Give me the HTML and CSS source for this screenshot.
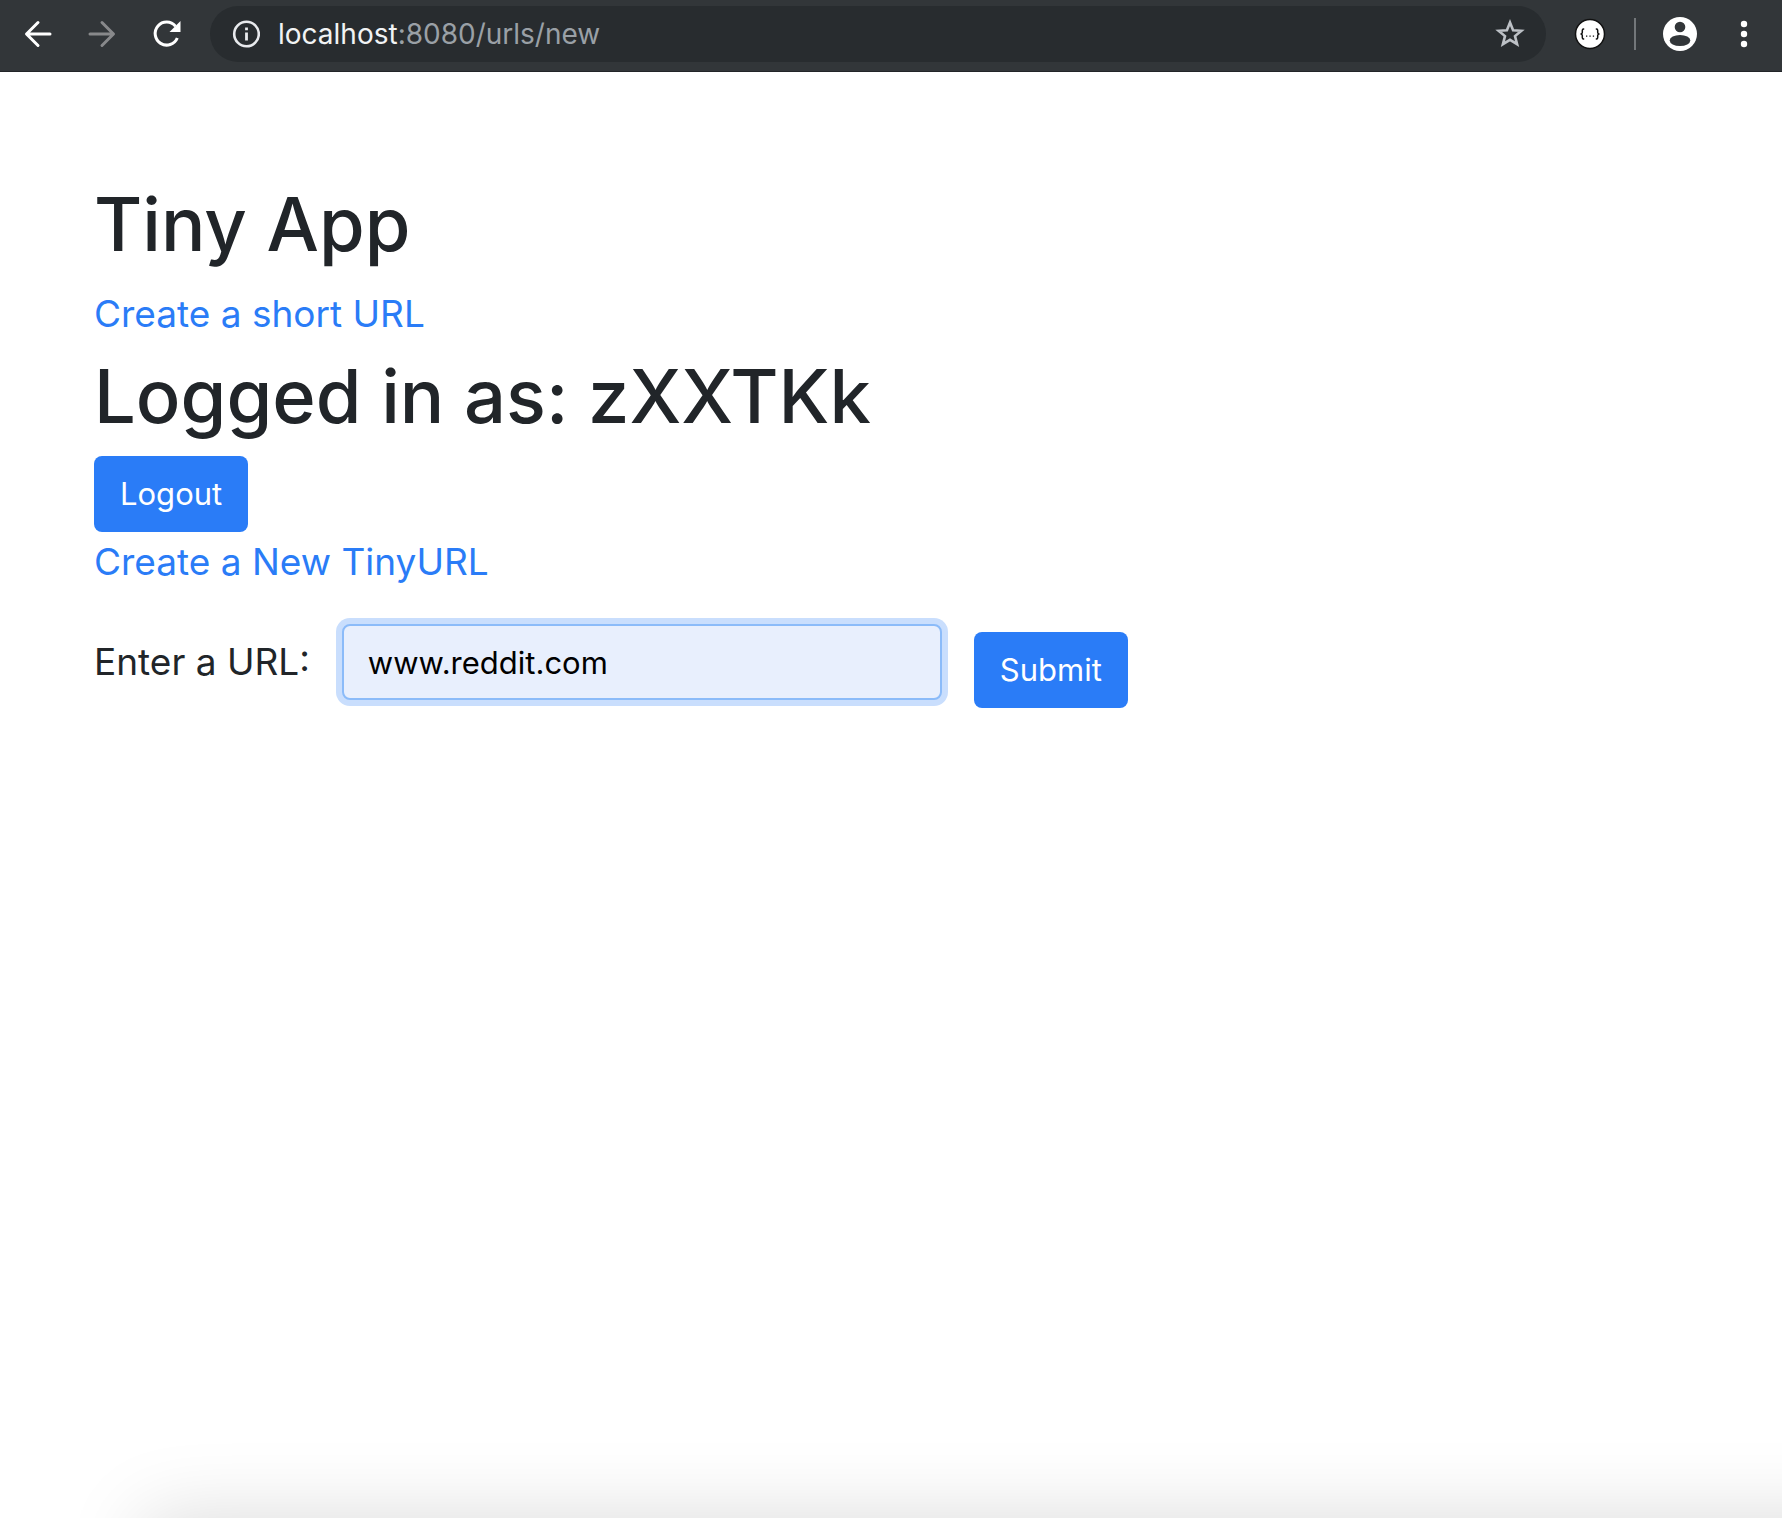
FILE: index.html
```html
<!DOCTYPE html>
<html lang="en">
<head>
  <meta charset="utf-8">
  <title>Tiny App</title>
  <link rel="stylesheet" href="styles.css">
</head>
<body>
  <header class="toolbar">
    <button class="tool" type="button" aria-label="Back">
      <svg width="32" height="32" viewBox="0 0 32 32" fill="none" stroke="#fff" stroke-width="3" stroke-linecap="round" stroke-linejoin="round"><path d="M28 16H5M16 4.500 4.500 16 16 27.500"/></svg>
    </button>
    <button class="tool" type="button" aria-label="Forward" disabled>
      <svg width="32" height="32" viewBox="0 0 32 32" fill="none" stroke="#88898b" stroke-width="3" stroke-linecap="round" stroke-linejoin="round"><path d="M4 16h23M16 4.500 27.500 16 16 27.500"/></svg>
    </button>
    <button class="tool" type="button" aria-label="Reload">
      <svg width="32" height="32" viewBox="0 0 32 32"><path d="M27.300 20A11.500 11.500 0 1 1 25.500 8.200" fill="none" stroke="#fff" stroke-width="3"/><path d="M30.500 3V14H19.500z" fill="#fff"/></svg>
    </button>
    <div class="address">
      <svg width="28" height="28" viewBox="0 0 28 28"><circle cx="14.500" cy="14" r="12.300" fill="none" stroke="#e8eaed" stroke-width="2.600"/><path d="M13.100 12.500h2.800v8h-2.800zM13.100 7.500h2.800v2.800h-2.800z" fill="#e8eaed"/></svg>
      <p class="location"><span class="host">localhost</span>:8080/urls/new</p>
      <button class="tool" type="button" aria-label="Bookmark this page">
        <svg width="32" height="32" viewBox="0 0 32 32"><path d="M16 4.500 19.100 12.200 27.400 12.800 21 18.100 23.100 26.200 16 21.800 8.900 26.200 11 18.100 4.600 12.800 12.900 12.200z" fill="none" stroke="#bdc1c6" stroke-width="2.600"/></svg>
      </button>
    </div>
    <button class="tool" type="button" aria-label="JSON viewer">
      <svg width="32" height="32" viewBox="0 0 32 32"><circle cx="16" cy="16" r="14.500" fill="#fff" stroke="#111" stroke-width="1.500"/><g fill="none" stroke="#111" stroke-width="1.500"><path d="M10.200 11H9.500Q8.300 11 8.300 12.500V14.500Q8.300 16 6.500 16Q8.300 16 8.300 17.500V19.500Q8.300 21 9.500 21h.7M21.800 11h.7Q23.700 11 23.700 12.500V14.500Q23.700 16 25.500 16Q23.700 16 23.700 17.500V19.500Q23.700 21 22.500 21h-.7"/></g><path d="M12 17.500h1.300v1.300H12zM15.400 17.500h1.300v1.300h-1.300zM18.800 17.500h1.300v1.300h-1.300z" fill="#111"/></svg>
    </button>
    <span class="divider"></span>
    <button class="tool profile" type="button" aria-label="Profile">
      <svg width="36" height="36" viewBox="0 0 36 36"><circle cx="18" cy="18" r="17" fill="#fff"/><circle cx="18" cy="11" r="5.300" fill="#323639"/><ellipse cx="18" cy="24.500" rx="10.300" ry="5.500" fill="#323639"/></svg>
    </button>
    <button class="tool" type="button" aria-label="Menu">
      <svg width="32" height="32" viewBox="0 0 32 32" fill="#fff"><circle cx="16" cy="6" r="3.200"/><circle cx="16" cy="16" r="3.200"/><circle cx="16" cy="26" r="3.200"/></svg>
    </button>
  </header>
  <main class="page">
    <h1 class="title">Tiny App</h1>
    <a class="link" href="#new">Create a short URL</a>
    <h1 class="title">Logged in as: zXXTKk</h1>
    <button class="btn" type="button">Logout</button>
    <a class="link" href="#new">Create a New TinyURL</a>
    <form class="url-form">
      <label class="label" for="long-url">Enter a URL:</label>
      <input class="field" id="long-url" type="text" value="www.reddit.com">
      <button class="btn submit" type="submit">Submit</button>
    </form>
  </main>
  <div class="window-shadow"></div>
</body>
</html>
```
FILE: styles.css
```css
* {
  box-sizing: border-box;
}

body {
  margin: 0;
  background: #fff;
  color: #212529;
  font-family: Inter, "Liberation Sans", sans-serif;
  font-size: 37px;
  line-height: 60px;
}

/* Browser toolbar */
.toolbar {
  display: flex;
  align-items: center;
  gap: 32px;
  height: 72px;
  padding: 0 22px 3px;
  background: #323639;
  border-bottom: 1px solid #222528;
}

.tool {
  display: flex;
  padding: 0;
  border: 0;
  background: none;
}

.address {
  display: flex;
  flex: 1;
  align-items: center;
  gap: 18px;
  height: 56px;
  margin: 0 -4px;
  padding: 0 20px 0 22px;
  border-radius: 28px;
  background: #282c2f;
}

.location {
  flex: 1;
  margin: 0;
  color: #9aa0a6;
  font-size: 28px;
}

.host {
  color: #f1f3f4;
}

.divider {
  width: 2px;
  height: 32px;
  margin: 0 -6px 0 -4px;
  background: #73777a;
}

.profile {
  margin-right: -2px;
}

/* Page */
.page {
  display: flex;
  flex-direction: column;
  align-items: flex-start;
  padding: 100px 94px;
}

.title {
  margin: 0 0 8px;
  font-size: 74px;
  font-weight: 500;
  line-height: 104px;
}

.link {
  color: #2a7cf7;
  text-decoration: none;
}

.btn {
  height: 76px;
  padding: 0 26px;
  border: 0;
  border-radius: 8px;
  background: #2a7cf7;
  color: #fff;
  font: inherit;
  font-size: 31px;
}

.url-form {
  display: flex;
  align-items: center;
  margin-top: 24px;
}

.label {
  margin-right: 32px;
}

.field {
  width: 600px;
  height: 76px;
  padding: 0 24px;
  border: 2px solid #8bbbf9;
  border-radius: 8px;
  outline: 0;
  background: #e8effd;
  box-shadow: 0 0 0 6px #c9defd;
  color: #000;
  font: inherit;
  font-size: 31px;
}

.submit {
  margin: 16px 0 0 32px;
}

/* Soft shadow rising from below the window */
.window-shadow {
  position: fixed;
  top: 100%;
  right: -160px;
  left: 144px;
  height: 160px;
  box-shadow: 0 0 80px rgba(0, 0, 0, 0.15);
}
```
